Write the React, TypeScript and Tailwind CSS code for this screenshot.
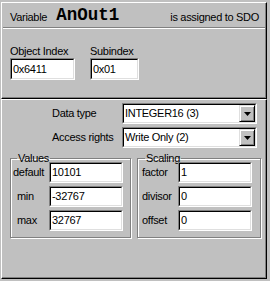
import React from "react";

const raised =
  "border border-t-white border-l-white border-b-black border-r-black shadow-[inset_-1px_-1px_0_#808080]";

function Sunken({ value, className, children }: { value?: string; className: string; children?: React.ReactNode }) {
  return (
    <div className={`border border-t-[#808080] border-l-[#808080] border-b-white border-r-white ${className}`}>
      <div className="h-full bg-white border border-t-black border-l-black border-b-[#dfdfdf] border-r-[#dfdfdf] flex items-center text-[11px] text-black">
        <span className="pl-[1px] flex-1 whitespace-nowrap overflow-hidden">{value}</span>
        {children}
      </div>
    </div>
  );
}

function Select({ value }: { value: string }) {
  return (
    <Sunken value={value} className="w-[135px] h-[21px]">
      <div className="h-full w-[16px] bg-[#c0c0c0] border border-t-[#dfdfdf] border-l-[#dfdfdf] border-b-black border-r-black shadow-[inset_1px_1px_0_white,inset_-1px_-1px_0_#808080] flex items-center justify-center">
        <svg width="7" height="4" viewBox="0 0 7 4">
          <polygon points="0,0 7,0 3.5,4" fill="#000" />
        </svg>
      </div>
    </Sunken>
  );
}

function Row({ label, value, lpad }: { label: string; value: string; lpad: string }) {
  return (
    <div className="flex items-center h-[21px]">
      <span className={`w-[36px] ${lpad} whitespace-nowrap`}>{label}</span>
      <Sunken value={value} className="w-[74px] h-[21px]" />
    </div>
  );
}

export default function App() {
  return (
    <div className="w-[270px] h-[281px] bg-[#c0c0c0] pt-[2px] pl-[1px] flex flex-col font-['Liberation_Sans',Arial,sans-serif] text-[11px] tracking-[-0.3px] leading-[13px] text-black">
      <div className={`w-[266px] h-[97px] flex flex-col ${raised}`}>
        <div className="h-[24px] flex items-end pl-[8px] pr-[7px] pb-[3px]">
          <span>Variable</span>
          <span className="ml-[9px] font-['Liberation_Mono',monospace] font-bold text-[17.5px] leading-[18px] tracking-normal">
            AnOut1
          </span>
          <span className="ml-auto">is assigned to SDO</span>
        </div>
        <div className="mx-[1px] border-t border-t-[#808080] border-b border-b-white" />
        <div className="flex gap-[15px] pl-[8px] pt-[16px]">
          <div className="flex flex-col">
            <span>Object Index</span>
            <Sunken value="0x6411" className="w-[65px] h-[22px]" />
          </div>
          <div className="flex flex-col">
            <span>Subindex</span>
            <Sunken value="0x01" className="w-[49px] h-[22px]" />
          </div>
        </div>
      </div>
      <div className={`w-[266px] h-[180px] flex flex-col ${raised}`}>
        <div className="flex flex-col gap-[3px] pt-[3px] pl-[50px]">
          <div className="flex items-center">
            <span className="w-[70px]">Data type</span>
            <Select value="INTEGER16 (3)" />
          </div>
          <div className="flex items-center">
            <span className="w-[70px]">Access rights</span>
            <Select value="Write Only (2)" />
          </div>
        </div>
        <div className="flex gap-[6px] pl-[8px] mt-[5px]">
          <fieldset className="w-[121px] border border-[#808080] shadow-[inset_1px_1px_0_white,1px_1px_0_white] pl-[2px] pb-[6px]">
            <legend className="ml-[4px] px-[1px] leading-[11px]">Values</legend>
            <div className="flex flex-col gap-[3px] -mt-[2px]">
              <Row label="default" value="10101" lpad="" />
              <Row label="min" value="-32767" lpad="pl-[4px]" />
              <Row label="max" value="32767" lpad="pl-[4px]" />
            </div>
          </fieldset>
          <fieldset className="w-[124px] border border-[#808080] shadow-[inset_1px_1px_0_white,1px_1px_0_white] pl-[4px] pb-[6px]">
            <legend className="ml-[3px] px-[1px] leading-[11px]">Scaling</legend>
            <div className="flex flex-col gap-[3px] -mt-[2px]">
              <Row label="factor" value="1" lpad="" />
              <Row label="divisor" value="0" lpad="" />
              <Row label="offset" value="0" lpad="" />
            </div>
          </fieldset>
        </div>
      </div>
    </div>
  );
}
